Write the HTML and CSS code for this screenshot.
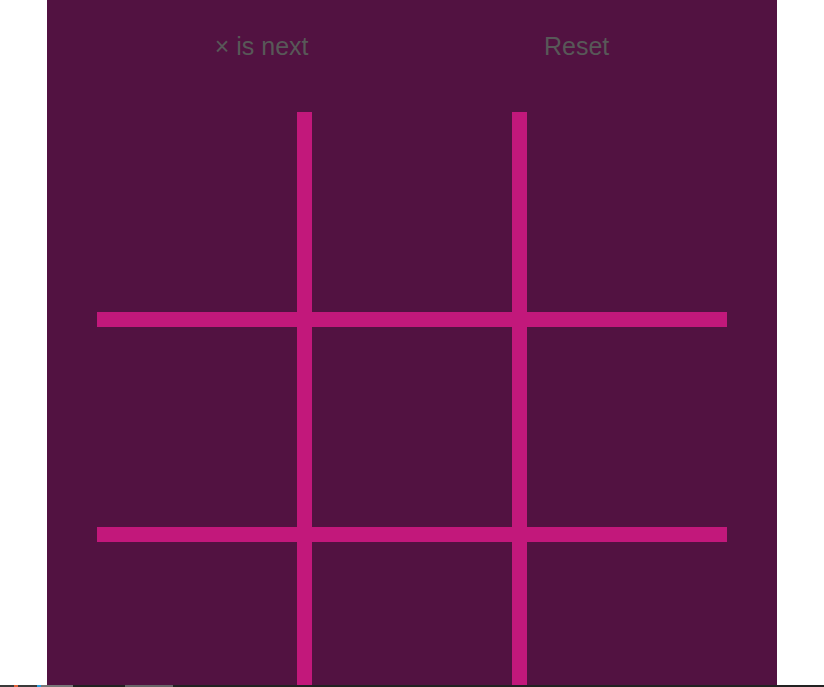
FILE: index.html
```html
<!DOCTYPE html>
<html lang="en">
<head>
    <meta charset="UTF-8">
    <meta name="viewport" content="width=device-width, initial-scale=1.0">
    <title>Tic Tac Toe</title>
    <link rel="stylesheet" href="styles.css">
</head>
<body>
    <div id="game">
        <!-- status and reset -->
        <div id="game-header">
            <span id="status">× is next</span>
            <span id="reset">Reset</span>
        </div>

        <!-- board -->
        <div id="board">
            <div class="cell"></div>
            <div class="cell"></div>
            <div class="cell"></div>
            <div class="cell"></div>
            <div class="cell"></div>
            <div class="cell"></div>
            <div class="cell"></div>
            <div class="cell"></div>
            <div class="cell"></div>
        </div>
    </div>

    <div id="taskbar">
        <span class="seg seg-a"></span>
        <span class="seg seg-orange"></span>
        <span class="seg seg-a2"></span>
        <span class="seg seg-blue"></span>
        <span class="seg seg-light"></span>
        <span class="seg seg-dark"></span>
        <span class="seg seg-light2"></span>
    </div>
</body>
</html>
```

FILE: styles.css
```css
html, body {
    margin: 0;
    padding: 0;
    background-color: #ffffff;
    overflow: hidden;
}
#game {
    width: 730px;
    height: 685px;
    margin-left: 47px;
    background-color: #521241;
    overflow: hidden;
    font-family: 'Liberation Sans', Arial, sans-serif;
}
#game-header {
    box-sizing: border-box;
    height: 112px;
    padding-top: 32px;
    margin: 0 50px;
    display: flex;
    justify-content: space-around;
    align-items: flex-start;
    font-size: 25px;
    color: #585858;
}
#reset {
    cursor: pointer;
}
#board {
    display: grid;
    grid-template-columns: repeat(3, 200px);
    grid-template-rows: repeat(3, 200px);
    gap: 15px;
    margin: 0 50px;
    background-color: #c2187b;
}
.cell {
    background-color: #521241;
}
#taskbar {
    height: 2px;
    display: flex;
    background-color: #222222;
}
.seg {
    height: 2px;
}
.seg-a { width: 14px; background-color: #3a3a3a; }
.seg-orange { width: 4px; background-color: #e0623a; }
.seg-a2 { width: 19px; background-color: #3a3a3a; }
.seg-blue { width: 4px; background-color: #2a9ee0; }
.seg-light { width: 32px; background-color: #777777; }
.seg-dark { width: 52px; }
.seg-light2 { width: 48px; background-color: #666666; }
```
